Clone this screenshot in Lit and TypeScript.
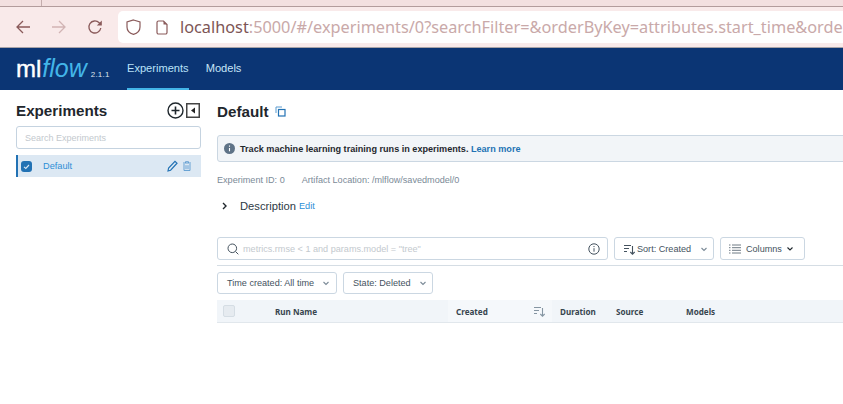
import { LitElement, html, css, svg } from 'lit';
import { customElement } from 'lit/decorators.js';

const chevron = svg`<path d="M2.5 4 L5 6.5 L7.5 4" fill="none" stroke="currentColor" stroke-width="1.1"/>`;

const sortIcon = svg`<path d="M1 2.5h7M1 5.5h5M1 8.5h3M9.5 3v8M7.3 9l2.2 2.2L11.7 9" fill="none" stroke="currentColor" stroke-width="1.1"/>`;

@customElement('app-root')
export class AppRoot extends LitElement {
  static styles = css`
    :host {
      display: block;
      width: 843px;
      height: 404px;
      overflow: hidden;
      background: #fff;
      font-family: 'Liberation Sans', Arial, sans-serif;
      color: #1f272d;
    }
    svg {
      display: block;
      flex: none;
    }

    /* browser chrome */
    .tabstrip {
      height: 6px;
      background: #f3e0e0;
      border-bottom: 1px solid #b39c9c;
      padding-left: 41px;
    }
    .tabstrip i {
      display: block;
      width: 1px;
      height: 6px;
      background: #c4adad;
    }
    .toolbar {
      height: 41px;
      box-sizing: border-box;
      background: #f9eaea;
      border-bottom: 1px solid #a9a4a8;
      display: flex;
      align-items: center;
      padding: 0 0 0 15px;
      color: #8a5a5a;
    }
    .toolbar .fwd {
      color: #d2b4b4;
      margin-left: 20px;
    }
    .toolbar .reload {
      margin-left: 20px;
    }
    .url {
      margin-left: 15px;
      flex: 1;
      min-width: 0;
      height: 32px;
      background: #fff;
      border-radius: 5px 0 0 5px;
      display: flex;
      align-items: center;
      padding-left: 8px;
      white-space: nowrap;
      font-family: 'Noto Sans', 'Open Sans', sans-serif;
      font-size: 16.29px;
      color: #c9a9a9;
    }
    .url .shield {
      margin-right: 15px;
    }
    .url .page {
      margin-right: 12px;
    }
    .url b {
      font-weight: 400;
      color: #7d5555;
    }

    /* app header */
    .nav {
      height: 42px;
      background: #0b3574;
      display: flex;
      align-items: stretch;
      padding-left: 16px;
      color: #fff;
    }
    .logo {
      display: flex;
      align-items: baseline;
      padding-top: 5px;
      width: 111px;
      box-sizing: border-box;
      font-size: 24px;
      line-height: 30px;
      white-space: nowrap;
    }
    .logo .ml {
      font-family: 'Liberation Sans', sans-serif;
      -webkit-text-stroke: 0.4px #fff;
    }
    .logo .flow {
      font-family: 'Liberation Sans', sans-serif;
      font-style: italic;
      color: #43b5e8;
      font-size: 25px;
      margin-left: 1px;
    }
    .logo .ver {
      font-size: 8px;
      color: #dde4ec;
      margin-left: 4px;
      letter-spacing: 0.2px;
    }
    .tab {
      display: flex;
      align-items: center;
      font-size: 11.1px;
      color: #c8e6f8;
      border-bottom: 2px solid transparent;
      margin-right: 17px;
    }
    .tab.active {
      color: #b9e2f8;
      border-bottom-color: #43b5e8;
    }

    .body {
      display: flex;
    }

    /* sidebar */
    .side {
      width: 217px;
      flex: none;
      box-sizing: border-box;
      padding: 11px 16px 0;
    }
    .side-head {
      display: flex;
      align-items: center;
      height: 18px;
      width: 184px;
    }
    .side-head h2 {
      margin: 0;
      flex: 1;
      font-size: 15.2px;
      font-weight: 700;
      color: #1f272d;
    }
    .side-head .collapse {
      margin-left: 2px;
    }
    .exp-search {
      margin-top: 7px;
      width: 185px;
      height: 23px;
      box-sizing: border-box;
      border: 1px solid #c5d3e0;
      border-radius: 3px;
      display: flex;
      align-items: center;
      padding-left: 8px;
      font-size: 9px;
      color: #c3c9ce;
    }
    .exp-row {
      margin-top: 6px;
      width: 185px;
      height: 22px;
      box-sizing: border-box;
      background: #dce8f3;
      border-left: 2px solid #2272b4;
      display: flex;
      align-items: center;
      padding-left: 3px;
      font-size: 9.2px;
      color: #2d8ed6;
    }
    .exp-row .name {
      margin-left: 11px;
      flex: 1;
    }
    .exp-row .trash {
      margin: 0 10px 0 5px;
    }
    .cb {
      width: 11px;
      height: 11px;
      border-radius: 3px;
      background: #2272b4;
    }

    /* main column */
    .main {
      flex: none;
      width: 700px;
      padding-top: 12px;
    }
    .title {
      display: flex;
      align-items: center;
      height: 18px;
      gap: 7px;
      font-size: 15.2px;
      font-weight: 700;
    }
    .alert {
      margin-top: 15px;
      height: 27px;
      box-sizing: border-box;
      background: #f2f5f8;
      border: 1px solid #cbd7e2;
      border-radius: 3px;
      display: flex;
      align-items: center;
      padding-left: 6px;
      gap: 5px;
      font-size: 9.1px;
      font-weight: 700;
      color: #1f272d;
    }
    .alert a {
      color: #2272b4;
    }
    .meta {
      margin-top: 13px;
      height: 11px;
      display: flex;
      gap: 17px;
      font-size: 9.1px;
      line-height: 11px;
      color: #7b8a97;
    }
    .desc {
      margin-top: 13px;
      height: 14px;
      display: flex;
      align-items: center;
      padding-left: 4px;
      font-size: 11.2px;
      color: #2d3a45;
    }
    .desc .label {
      margin-left: 12px;
    }
    .desc a {
      margin-left: 3px;
      font-size: 9.2px;
      color: #2d8ed6;
    }
    .search-row {
      margin-top: 24px;
      display: flex;
      gap: 6px;
      padding-bottom: 5px;
      border-bottom: 1px solid #d5dde4;
    }
    .query {
      width: 391px;
      height: 23px;
      box-sizing: border-box;
      border: 1px solid #cbd7e2;
      border-radius: 3px;
      display: flex;
      align-items: center;
      padding: 0 7px 0 9px;
      gap: 4px;
      font-size: 9.1px;
      color: #c3c9ce;
    }
    .query span {
      flex: 1;
    }
    .btn {
      height: 23px;
      box-sizing: border-box;
      border: 1px solid #cbd7e2;
      border-radius: 3px;
      display: flex;
      align-items: center;
      font-size: 9.1px;
      color: #44525e;
      white-space: nowrap;
    }
    .sort {
      width: 100px;
      padding-left: 8px;
      gap: 2px;
    }
    .sort .caret {
      margin-left: 6px;
      color: #7b8a97;
    }
    .cols {
      width: 85px;
      padding-left: 8px;
      gap: 5px;
    }
    .cols .caret {
      margin-left: -2px;
    }
    .filters {
      margin-top: 6px;
      display: flex;
      gap: 6px;
    }
    .filters .btn {
      height: 22px;
      padding-left: 9px;
      gap: 7px;
      color: #44525e;
    }
    .filters .btn svg {
      color: #7b8a97;
    }
    .time {
      width: 120px;
    }
    .state {
      width: 90px;
    }
    .thead {
      margin-top: 6px;
      height: 23px;
      box-sizing: border-box;
      background: #f1f5f9;
      border-bottom: 1px solid #e1e7ec;
      display: grid;
      grid-template-columns: 50px 181px 104px 56px 70px 1fr;
      align-items: stretch;
      font-family: 'Noto Sans', sans-serif;
      font-size: 8.1px;
      font-weight: 700;
      color: #38454f;
    }
    .thead > div {
      display: flex;
      align-items: center;
      padding-left: 8px;
    }
    .thead .hdr-cb {
      padding-left: 6px;
    }
    .thead .hdr-cb i {
      display: block;
      width: 10px;
      height: 10px;
      background: #e6ebf0;
      border: 1px solid #d5dde4;
      border-radius: 2px;
    }
    .thead .created {
      background: #f5f8fb;
      justify-content: space-between;
      padding-right: 7px;
      color: #38454f;
    }
    .thead .created svg {
      color: #8595a2;
    }
  `;

  render() {
    return html`
      <div class="tabstrip"><i></i></div>
      <div class="toolbar">
        <svg width="16" height="16" viewBox="0 0 16 16">
          <path d="M15 8H2M8 2 L2 8 L8 14" fill="none" stroke="currentColor" stroke-width="1.3"/>
        </svg>
        <svg class="fwd" width="16" height="16" viewBox="0 0 16 16">
          <path d="M1 8H14M8 2 L14 8 L8 14" fill="none" stroke="currentColor" stroke-width="1.3"/>
        </svg>
        <svg class="reload" width="16" height="16" viewBox="0 0 16 16">
          <path d="M13.8 9a6 6 0 1 1-1.6-5.2L13.5 5" fill="none" stroke="currentColor" stroke-width="1.3"/>
          <path d="M14.8 1.5V6.5H9.8Z" fill="currentColor"/>
        </svg>
        <div class="url">
          <svg class="shield" width="15" height="16" viewBox="0 0 15 16">
            <path d="M7.5 1 L14 3 V8 C14 12 10.5 14.5 7.5 15.3 C4.5 14.5 1 12 1 8 V3 Z" fill="none" stroke="#8a5a5a" stroke-width="1.2"/>
          </svg>
          <svg class="page" width="12" height="15" viewBox="0 0 12 15">
            <path d="M2.5 1H7.5L11 4.5V12.5A1.5 1.5 0 0 1 9.5 14H2.5A1.5 1.5 0 0 1 1 12.5V2.5A1.5 1.5 0 0 1 2.5 1Z" fill="none" stroke="#8a5a5a" stroke-width="1.2"/>
            <path d="M7.5 1V4.5H11" fill="#8a5a5a"/>
          </svg>
          <span><b>localhost</b>:5000/#/experiments/0?searchFilter=&orderByKey=attributes.start_time&orde</span>
        </div>
      </div>

      <div class="nav">
        <div class="logo">
          <span class="ml">ml</span><span class="flow">flow</span><span class="ver">2.1.1</span>
        </div>
        <div class="tab active">Experiments</div>
        <div class="tab">Models</div>
      </div>

      <div class="body">
        <aside class="side">
          <div class="side-head">
            <h2>Experiments</h2>
            <svg width="17" height="17" viewBox="0 0 17 17">
              <circle cx="8.5" cy="8.5" r="7.5" fill="none" stroke="#1f272d" stroke-width="1.4"/>
              <path d="M8.5 4.5v8M4.5 8.5h8" stroke="#1f272d" stroke-width="1.6"/>
            </svg>
            <svg class="collapse" width="14" height="15" viewBox="0 0 14 15">
              <rect x="0.75" y="0.75" width="12.5" height="13.5" fill="none" stroke="#444" stroke-width="1.5"/>
              <path d="M9 4.5V10.5L5 7.5Z" fill="#222"/>
            </svg>
          </div>
          <div class="exp-search">Search Experiments</div>
          <div class="exp-row">
            <span class="cb">
              <svg width="11" height="11" viewBox="0 0 11 11">
                <path d="M3 5.8 L4.8 7.4 L8 4" fill="none" stroke="#dce8f3" stroke-width="1.1"/>
              </svg>
            </span>
            <span class="name">Default</span>
            <svg width="11" height="12" viewBox="0 0 11 12">
              <path d="M1 11 L1.6 8 L8 1.3 L10 3.2 L3.6 10.2 Z" fill="none" stroke="#2272b4" stroke-width="1.2"/>
            </svg>
            <svg class="trash" width="8" height="10" viewBox="0 0 8 10">
              <path d="M0 2h8M2.5 2V.7h3V2M1 3v6.5h6V3M3 4.2v4M5 4.2v4" fill="none" stroke="#5b9bd0" stroke-width="0.9"/>
            </svg>
          </div>
        </aside>

        <main class="main">
          <div class="title">
            Default
            <svg width="11" height="11" viewBox="0 0 11 11">
              <path d="M1 7V1H7" fill="none" stroke="#5b9bd0" stroke-width="1"/>
              <rect x="3.5" y="3.5" width="6.5" height="6.5" fill="none" stroke="#2272b4" stroke-width="1.2"/>
            </svg>
          </div>
          <div class="alert">
            <svg width="11" height="11" viewBox="0 0 11 11">
              <circle cx="5.5" cy="5.5" r="5.5" fill="#5f7387"/>
              <path d="M5.5 5v3.2M5.5 2.6v1.2" stroke="#fff" stroke-width="1.1"/>
            </svg>
            <span>Track machine learning training runs in experiments. <a>Learn more</a></span>
          </div>
          <div class="meta">
            <span>Experiment ID: 0</span>
            <span>Artifact Location: /mlflow/savedmodel/0</span>
          </div>
          <div class="desc">
            <svg width="7" height="8" viewBox="0 0 7 8">
              <path d="M2 1 L5 4 L2 7" fill="none" stroke="#1f272d" stroke-width="1.4"/>
            </svg>
            <span class="label">Description</span>
            <a>Edit</a>
          </div>
          <div class="search-row">
            <div class="query">
              <svg width="12" height="12" viewBox="0 0 12 12">
                <circle cx="5.3" cy="5.3" r="4.3" fill="none" stroke="#44525e" stroke-width="1"/>
                <path d="M8.5 8.5 L11.3 11.3" stroke="#44525e" stroke-width="1"/>
              </svg>
              <span>metrics.rmse &lt; 1 and params.model = "tree"</span>
              <svg width="12" height="12" viewBox="0 0 12 12">
                <circle cx="6" cy="6" r="5.2" fill="none" stroke="#44525e" stroke-width="1"/>
                <path d="M6 5.2v3.5M6 3v1.1" stroke="#44525e" stroke-width="1"/>
              </svg>
            </div>
            <div class="btn sort">
              <svg width="12" height="12" viewBox="0 0 12 12">${sortIcon}</svg>
              Sort: Created
              <svg class="caret" width="10" height="10" viewBox="0 0 10 10">${chevron}</svg>
            </div>
            <div class="btn cols">
              <svg width="12" height="10" viewBox="0 0 12 10">
                <path d="M0 1h1.5M3 1h9M0 3.7h1.5M3 3.7h9M0 6.3h1.5M3 6.3h9M0 9h1.5M3 9h9" stroke="#5d6b77" stroke-width="0.9"/>
              </svg>
              Columns
              <svg class="caret" width="10" height="10" viewBox="0 0 10 10">
                <path d="M2.5 3.5 L5 6 L7.5 3.5" fill="none" stroke="#1f272d" stroke-width="1.1"/>
              </svg>
            </div>
          </div>
          <div class="filters">
            <div class="btn time">
              Time created: All time
              <svg width="10" height="10" viewBox="0 0 10 10">${chevron}</svg>
            </div>
            <div class="btn state">
              State: Deleted
              <svg width="10" height="10" viewBox="0 0 10 10">${chevron}</svg>
            </div>
          </div>
          <div class="thead">
            <div class="hdr-cb"><i></i></div>
            <div>Run Name</div>
            <div class="created">
              Created
              <svg width="12" height="12" viewBox="0 0 12 12">${sortIcon}</svg>
            </div>
            <div>Duration</div>
            <div>Source</div>
            <div>Models</div>
          </div>
        </main>
      </div>
    `;
  }
}

declare global {
  interface HTMLElementTagNameMap {
    'app-root': AppRoot;
  }
}
